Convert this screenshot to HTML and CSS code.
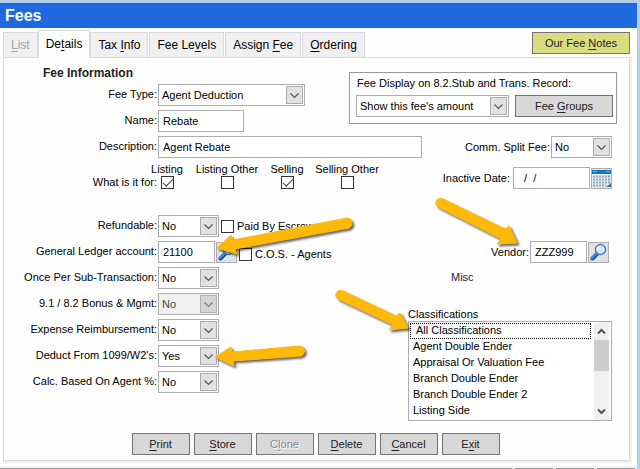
FILE: index.html
```html
<!DOCTYPE html>
<html lang="en">
<head>
  <meta charset="UTF-8">
  <meta name="viewport" content="width=device-width, initial-scale=1.0">
  <title>Fees</title>
  <link rel="stylesheet" href="styles.css">
</head>
<body>
  <svg class="defs" aria-hidden="true">
    <symbol id="drop" viewBox="0 0 17 18">
      <rect x="0.5" y="0.5" width="16" height="17" fill="#e1e1e1" stroke="#adadb0"/>
      <path d="M4.5 7.5l4 4 4-4" fill="none" stroke="#555" stroke-width="1.2"/>
    </symbol>
    <symbol id="lens" viewBox="0 0 19 19">
      <path d="M3.500 15.500l5-5" stroke="#174f9e" stroke-width="4" stroke-linecap="round"/>
      <path d="M3 15l4.500-4.500" stroke="#3f8be6" stroke-width="2" stroke-linecap="round"/>
      <circle cx="11.500" cy="6.500" r="5" fill="#d5edfb" stroke="#4c7fb8" stroke-width="1.400"/>
      <path d="M8.500 6.500a3 3 0 0 1 3-3" fill="none" stroke="#fff" stroke-width="1.500"/>
    </symbol>
  </svg>

  <main class="window">
    <h1 class="title">Fees</h1>

    <div class="top-bar">
      <nav class="tabs">
        <button class="tab" disabled><u>L</u>ist</button>
        <button class="tab active">De<u>t</u>ails</button>
        <button class="tab">Tax <u>I</u>nfo</button>
        <button class="tab">Fee Le<u>v</u>els</button>
        <button class="tab">Assign <u>F</u>ee</button>
        <button class="tab"><u>O</u>rdering</button>
      </nav>
      <button class="btn wide notes">Our Fee <u>N</u>otes</button>
    </div>

    <form class="panel">
      <div class="section">
        <div>
          <h2>Fee Information</h2>
          <div class="field">
            <label for="feeType">Fee Type:</label>
            <span class="select type"><select id="feeType"><option>Agent Deduction</option></select><svg><use href="#drop"/></svg></span>
          </div>
          <div class="field">
            <label for="name">Name:</label>
            <input class="text name" type="text" id="name" value="Rebate">
          </div>
        </div>
        <div class="display-box">
          <label for="display">Fee Display on 8.2.Stub and Trans. Record:</label>
          <div class="display-row">
            <span class="select amount"><select id="display"><option>Show this fee's amount</option></select><svg><use href="#drop"/></svg></span>
            <button type="button" class="btn wide">Fee <u>G</u>roups</button>
          </div>
        </div>
      </div>

      <div class="section">
        <div class="field">
          <label for="description">Description:</label>
          <input class="text description" type="text" id="description" value="Agent Rebate">
        </div>
        <div class="right-field">
          <label for="split">Comm. Split Fee:</label>
          <span class="select"><select id="split"><option>No</option></select><svg><use href="#drop"/></svg></span>
        </div>
      </div>

      <div class="section usage">
        <div class="field">
          <span class="label">What is it for:</span>
          <div class="checks">
            <label>Listing<input type="checkbox" checked></label>
            <label>Listing Other<input type="checkbox"></label>
            <label>Selling<input type="checkbox" checked></label>
            <label>Selling Other<input type="checkbox"></label>
          </div>
        </div>
        <div class="right-field">
          <label class="date-label" for="inactive">Inactive Date:</label>
          <input class="text date" type="text" id="inactive" value="  /  /">
          <button type="button" class="icon-btn" aria-label="Pick date">
            <svg viewBox="0 0 19 19">
              <rect x="0" y="1" width="19" height="17" fill="#e4edf2"/>
              <rect x="0" y="1" width="19" height="4" fill="#1b74b8"/>
              <path d="M1 2.500h4M14 2.500h4" stroke="#5ba5d8"/>
              <path d="M1 7.500h17M1 10.500h17M1 13.500h17M1 16.500h13" stroke="#8ba7b6" stroke-width="2" stroke-dasharray="2 1"/>
              <path d="M14 18l5-4v4z" fill="#4d7184"/>
            </svg>
          </button>
        </div>
      </div>

      <div class="section lower">
        <div>
          <div class="field">
            <label for="refundable">Refundable:</label>
            <span class="select"><select id="refundable"><option>No</option></select><svg><use href="#drop"/></svg></span>
            <label class="check"><input type="checkbox">Paid By Escrow</label>
          </div>
          <div class="field">
            <label for="ledger">General Ledger account:</label>
            <span class="target">
              <input class="text code" type="text" id="ledger" value="21100">
              <svg class="arrow to-ledger" viewBox="0 0 1 1"><path d="M0 0L14-13 16-8 130-30A5.300 5.300 0 0 1 132-20L18 1 20 6Z"/></svg>
            </span>
            <button type="button" class="icon-btn" aria-label="Find account"><svg><use href="#lens"/></svg></button>
            <label class="check agents"><input type="checkbox">C.O.S. - Agents</label>
          </div>
          <div class="field">
            <label for="once">Once Per Sub-Transaction:</label>
            <span class="select"><select id="once"><option>No</option></select><svg><use href="#drop"/></svg></span>
          </div>
          <div class="field">
            <label for="bonus">9.1 / 8.2 Bonus &amp; Mgmt:</label>
            <span class="select off"><select id="bonus" disabled><option>No</option></select><svg><use href="#drop"/></svg></span>
          </div>
          <div class="field">
            <label for="expense">Expense Reimbursement:</label>
            <span class="select"><select id="expense"><option>No</option></select><svg><use href="#drop"/></svg></span>
          </div>
          <div class="field">
            <label for="deduct">Deduct From 1099/W2's:</label>
            <span class="target">
              <span class="select"><select id="deduct"><option>Yes</option></select><svg><use href="#drop"/></svg></span>
              <svg class="arrow to-deduct" viewBox="0 0 1 1"><path d="M0 0L16-10 17-5 85-11A5.200 5.200 0 0 1 86-1L18 4 19 9Z"/></svg>
            </span>
          </div>
          <div class="field">
            <label for="calc">Calc. Based On Agent %:</label>
            <span class="select"><select id="calc"><option>No</option></select><svg><use href="#drop"/></svg></span>
          </div>
        </div>

        <div class="side">
          <div class="right-field vendor">
            <label for="vendor">Vendor:</label>
            <span class="target">
              <input class="text code" type="text" id="vendor" value="ZZZ999">
              <svg class="arrow to-vendor" viewBox="0 0 1 1"><path d="M0 0L-8-17-12-14-74-44A4.700 4.700 0 0 0-79-36L-16-4-20 1Z"/></svg>
            </span>
            <button type="button" class="icon-btn" aria-label="Find vendor"><svg><use href="#lens"/></svg></button>
          </div>
          <p class="misc">Misc</p>
          <label class="list-label" for="classes">Classifications</label>
          <div class="list target">
            <select id="classes" size="6">
              <option class="current">All Classifications</option>
              <option>Agent Double Ender</option>
              <option>Appraisal Or Valuation Fee</option>
              <option>Branch Double Ender</option>
              <option>Branch Double Ender 2</option>
              <option>Listing Side</option>
            </select>
            <div class="scroll">
              <svg viewBox="0 0 15 18"><path d="M4 11.500l3.500-3.500 3.500 3.500" fill="none" stroke="#555" stroke-width="2"/></svg>
              <div class="thumb"></div>
              <svg viewBox="0 0 15 18"><path d="M4 7.500l3.500 3.500 3.500-3.500" fill="none" stroke="#555" stroke-width="2"/></svg>
            </div>
            <svg class="arrow to-list" viewBox="0 0 1 1"><path d="M0 0L-8-15-12-12-65-37A4.700 4.700 0 0 0-70-29L-15-3-19 2Z"/></svg>
          </div>
        </div>
      </div>

      <div class="actions">
        <button type="button" class="btn"><u>P</u>rint</button>
        <button type="button" class="btn"><u>S</u>tore</button>
        <button type="button" class="btn" disabled>C<u>l</u>one</button>
        <button type="button" class="btn"><u>D</u>elete</button>
        <button type="button" class="btn"><u>C</u>ancel</button>
        <button type="button" class="btn">E<u>x</u>it</button>
      </div>
    </form>

    <footer class="status">
      <span class="wide-cell"></span><span></span><span></span><span></span>
    </footer>
  </main>
</body>
</html>
```
FILE: styles.css
```css
* {
  margin: 0;
  padding: 0;
  box-sizing: border-box;
}

body {
  background-color: #b5cfea;
  color: #000;
  font-family: "Liberation Sans", Arial, sans-serif;
  font-size: 11px;
  line-height: 14px;
  padding: 3px 3px 0 0;
}

button,
input,
select {
  font: inherit;
  color: inherit;
}

u {
  text-underline-offset: 2px;
}

.defs {
  position: absolute;
  width: 0;
  height: 0;
}

.window {
  background-color: #fefefe;
  overflow: hidden;
}

.title {
  background-color: #1f69de;
  color: white;
  font-size: 16px;
  line-height: 25px;
  padding-left: 5px;
}

/* tabs */
.top-bar {
  display: flex;
  justify-content: space-between;
  align-items: flex-end;
  height: 29px;
  padding: 0 7px 0 3px;
}

.tabs {
  display: flex;
  align-items: flex-end;
  gap: 1px;
  margin-bottom: -1px;
}

.tab {
  height: 26px;
  padding: 0 7px;
  background-color: #f0f0f0;
  border: 1px solid #d9d9d9;
  font-size: 12px;
}

.tab:disabled {
  color: #a0a0a0;
}

.tab.active {
  height: 28px;
  margin: 0 -1px;
  background-color: #fefefe;
  border-bottom-color: #fefefe;
  position: relative;
}

.btn {
  width: 58px;
  height: 22px;
  background-color: #d8d8d8;
  border: 1px solid #747474;
  color: #222;
}

.btn:disabled {
  color: #888;
  text-shadow: 1px 1px 0 white;
}

.btn.wide {
  width: 98px;
}

.btn.notes {
  background-color: #dbdb80;
  margin-bottom: 3px;
}

/* form */
.panel {
  margin: 0 7px 0 3px;
  padding: 8px 12px 5px 0;
  border: 1px solid #d9d9d9;
  box-shadow: 1px 1px 0 1px #f0f0f0;
}

.section {
  display: flex;
  justify-content: space-between;
}

h2 {
  font-size: 12px;
  line-height: 14px;
  padding: 0 0 4px 39px;
  color: #222;
}

.field {
  display: flex;
  align-items: center;
  height: 22px;
  margin-bottom: 4px;
}

.field > label:first-child,
.field > .label {
  width: 154px;
  padding: 0 1px 2px 0;
  text-align: right;
  white-space: nowrap;
}

.text {
  display: block;
  height: 22px;
  padding: 0 4px;
  background-color: white;
  border: 1px solid #abadb3;
  white-space: pre;
}

.name {
  width: 86px;
}

.description {
  width: 264px;
}

.code {
  width: 57px;
}

.date {
  width: 77px;
  padding-left: 4px;
}

.select {
  display: block;
  position: relative;
  width: 61px;
  height: 22px;
}

.select select {
  display: block;
  width: 100%;
  height: 22px;
  padding: 0 20px 0 3px;
  appearance: none;
  background-color: white;
  border: 1px solid #abadb3;
  border-radius: 0;
}

.select svg {
  position: absolute;
  top: 2px;
  right: 2px;
  width: 17px;
  height: 18px;
  pointer-events: none;
}

.select.type {
  width: 147px;
}

.select.amount {
  width: 153px;
}

.select.off select {
  background-color: #f0f0f0;
  color: #444;
  opacity: 1;
}

.select.off svg {
  filter: brightness(0.9);
  opacity: 0.7;
}

.display-box {
  width: 268px;
  height: 52px;
  margin-top: 6px;
  padding: 3px 3px 0 6px;
  border: 1px solid #999;
}

.display-box label {
  display: block;
  padding-left: 1px;
}

.display-row {
  display: flex;
  justify-content: space-between;
  margin-top: 5px;
}

.right-field {
  display: flex;
  align-items: center;
  height: 22px;
  gap: 1px;
  padding-right: 5px;
}

.date-label {
  margin-right: 2px;
}

.usage {
  align-items: flex-end;
  height: 27px;
}

.usage .field {
  align-items: flex-end;
  height: 27px;
  margin: 0;
}

.usage .label {
  padding-bottom: 0;
}

.checks {
  display: grid;
  grid-template-columns: repeat(4, 60px);
  margin-left: -21px;
}

.checks label {
  display: flex;
  flex-direction: column;
  align-items: center;
  white-space: nowrap;
}

input[type="checkbox"] {
  appearance: none;
  width: 13px;
  height: 13px;
  background-color: white;
  border: 1px solid #333;
}

input[type="checkbox"]:checked::before {
  content: "";
  display: block;
  width: 9px;
  height: 4px;
  margin: 2px 1px;
  border: solid #444;
  border-width: 0 0 1px 1px;
  transform: rotate(-45deg);
}

.check {
  display: flex;
  align-items: center;
  gap: 3px;
  padding-left: 2px;
}

.check.agents {
  padding-top: 4px;
}

.icon-btn {
  width: 21px;
  height: 21px;
  background-color: #e1e1e1;
  border: 1px solid #adadad;
}

.icon-btn svg {
  display: block;
  width: 19px;
  height: 19px;
}

.field .icon-btn {
  margin-left: 1px;
}

.lower {
  padding-top: 26px;
}

.side {
  width: 209px;
  padding-top: 26px;
}

.vendor {
  justify-content: flex-end;
  padding-right: 8px;
}

.misc {
  margin: 7px 0 23px 43px;
  color: #1c1c3c;
}

.list-label {
  display: block;
}

.list {
  display: flex;
  height: 100px;
  margin-right: 5px;
  border: 1px solid #abadb3;
  background-color: white;
}

.list select {
  flex: 1;
  height: 98px;
  padding: 1px;
  border: none;
  outline: none;
  background-color: white;
  overflow: hidden;
  scrollbar-width: none;
}

.list option {
  height: 16px;
  min-height: 16px;
  padding: 1px 3px;
  line-height: 14px;
}

.list .current {
  padding: 0 5px;
  border: 1px dotted #000;
}

.scroll {
  display: flex;
  flex-direction: column;
  width: 15px;
  margin: 0 2px;
  background-color: #f0f0f0;
}

.scroll svg {
  width: 15px;
  height: 18px;
}

.thumb {
  height: 31px;
  margin-bottom: auto;
  background-color: #cdcdcd;
}

/* callout arrows, drawn from the tip */
.target {
  position: relative;
}

.arrow {
  position: absolute;
  z-index: 2;
  width: 1px;
  height: 1px;
  overflow: visible;
  pointer-events: none;
  fill: #fdb90a;
  stroke: #fdb90a;
  filter: drop-shadow(2px 2px 1px rgba(0, 0, 0, 0.6));
}

.to-ledger {
  left: 59px;
  top: 7px;
}

.to-deduct {
  left: 57px;
  top: 12px;
}

.to-vendor {
  left: -13px;
  top: 2px;
}

.to-list {
  left: -1px;
  top: 6px;
}

.actions {
  display: flex;
  justify-content: center;
  gap: 4px;
  margin-top: 12px;
  padding-left: 10px;
}

.status {
  display: flex;
  gap: 3px;
  margin-top: 5px;
  padding: 2px 2px 0 0;
  background-color: #f0f0f0;
}

.status span {
  width: 38px;
  height: 1px;
  background-color: #999;
}

.status .wide-cell {
  flex: 1;
}
```
